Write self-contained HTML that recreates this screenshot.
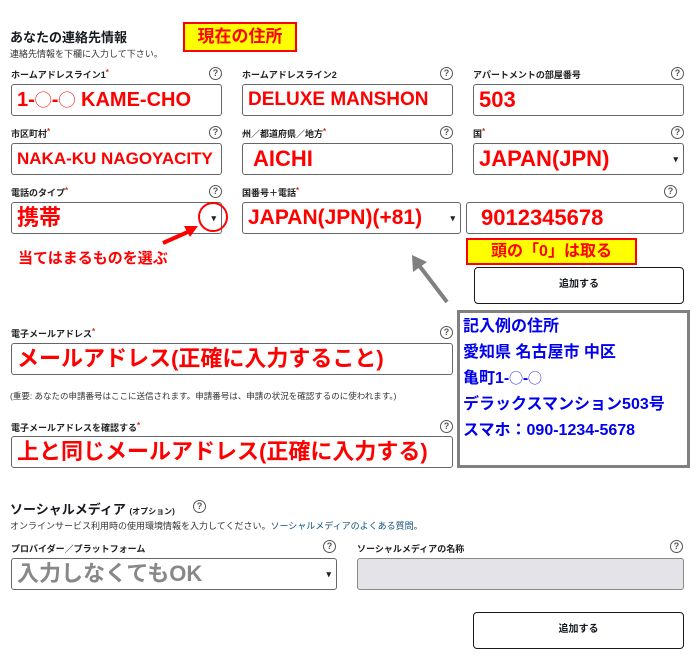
<!DOCTYPE html>
<html><head><meta charset="utf-8"><style>
*{margin:0;padding:0;box-sizing:border-box}
body{width:700px;height:667px;background:#fff;position:relative;overflow:hidden;font-family:"Liberation Sans","Noto Sans CJK JP",sans-serif;color:#16191f}
.a{position:absolute;white-space:nowrap}
.lbl{font-size:9px;font-weight:bold;color:#222}
.lbl i{color:#d13212;font-style:normal;font-size:8px;vertical-align:top}
.q{position:absolute;width:13px;height:13px;border:1.3px solid #555;border-radius:50%;font-size:9px;line-height:11px;text-align:center;color:#555;font-weight:bold}
.in{position:absolute;border:1.5px solid #666;border-radius:3px;background:#fff;height:32px;color:#ff0000;font-weight:bold;font-size:22px;line-height:30px;padding-left:5px;white-space:nowrap;overflow:hidden}
.dd:after{content:"▾";position:absolute;right:5px;top:0;font-size:9px;color:#222}
.btn{position:absolute;border:1.5px solid #16191f;border-radius:4px;font-size:10px;font-weight:bold;text-align:center;color:#16191f}
.y{position:absolute;background:#ffff00;border:2px solid #f00;color:#f00;font-weight:bold;text-align:center}
.blue{color:#0000ee;font-weight:bold;font-size:16px;line-height:26px}
.c{font-weight:normal;font-size:0.85em}
</style></head><body>
<div class="a" style="left:10px;top:27px;font-size:13px;font-weight:bold">あなたの連絡先情報</div>
<div class="y" style="left:183px;top:22px;width:114px;height:30px;font-size:17px;line-height:26px">現在の住所</div>
<div class="a" style="left:10px;top:47px;font-size:9px;color:#333">連絡先情報を下欄に入力して下さい。</div>

<div class="a lbl" style="left:11px;top:68px">ホームアドレスライン1<i>*</i></div><div class="q" style="left:209px;top:67px">?</div>
<div class="a lbl" style="left:242px;top:68px">ホームアドレスライン2</div><div class="q" style="left:440px;top:67px">?</div>
<div class="a lbl" style="left:473px;top:68px">アパートメントの部屋番号</div><div class="q" style="left:671px;top:67px">?</div>
<div class="in" style="left:11px;top:84px;width:211px;font-size:20px">1-<span class="c">◯</span>-<span class="c">◯</span> KAME-CHO</div>
<div class="in" style="left:242px;top:84px;width:211px;font-size:19px">DELUXE MANSHON</div>
<div class="in" style="left:473px;top:84px;width:211px">503</div>

<div class="a lbl" style="left:11px;top:127px">市区町村<i>*</i></div><div class="q" style="left:209px;top:126px">?</div>
<div class="a lbl" style="left:242px;top:127px">州／都道府県／地方<i>*</i></div><div class="q" style="left:440px;top:126px">?</div>
<div class="a lbl" style="left:473px;top:127px">国<i>*</i></div><div class="q" style="left:671px;top:126px">?</div>
<div class="in" style="left:11px;top:143px;width:211px;font-size:17px">NAKA-KU NAGOYACITY</div>
<div class="in" style="left:242px;top:143px;width:211px;padding-left:10px">AICHI</div>
<div class="in dd" style="left:473px;top:143px;width:211px">JAPAN(JPN)</div>

<div class="a lbl" style="left:11px;top:186px">電話のタイプ<i>*</i></div><div class="q" style="left:209px;top:185px">?</div>
<div class="a lbl" style="left:242px;top:186px">国番号＋電話<i>*</i></div><div class="q" style="left:664px;top:185px">?</div>
<div class="in dd" style="left:11px;top:202px;width:211px">携帯</div>
<div class="in dd" style="left:242px;top:202px;width:219px;font-size:21px">JAPAN(JPN)(+81)</div>
<div class="in" style="left:466px;top:202px;width:218px;padding-left:14px">9012345678</div>
<div style="position:absolute;left:198px;top:202px;width:30px;height:30px;border:2px solid #f00;border-radius:50%"></div>
<svg class="a" style="left:0;top:0" width="700" height="667">
<line x1="163" y1="243" x2="190" y2="231" stroke="#f00" stroke-width="4"/>
<polygon points="198,226 184,226 190,237" fill="#f00"/>
<line x1="447" y1="302" x2="418" y2="264" stroke="#808080" stroke-width="4"/>
<polygon points="412,255 413,272 427,262" fill="#808080"/>
</svg>
<div class="a" style="left:18px;top:247px;font-size:15px;font-weight:bold;color:#f00">当てはまるものを選ぶ</div>
<div class="y" style="left:466px;top:238px;width:171px;height:27px;font-size:16px;line-height:23px">頭の「0」は取る</div>
<div class="btn" style="left:474px;top:267px;width:210px;height:37px;line-height:34px">追加する</div>

<div style="position:absolute;left:457px;top:310px;width:233px;height:158px;border:3px solid #808080;padding:1px 0 0 3px" class="blue">記入例の住所<br>愛知県 名古屋市 中区<br>亀町1-<span class="c">◯</span>-<span class="c">◯</span><br>デラックスマンション503号<br>スマホ：090-1234-5678</div>

<div class="a lbl" style="left:11px;top:327px">電子メールアドレス<i>*</i></div><div class="q" style="left:440px;top:326px">?</div>
<div class="in" style="left:11px;top:343px;width:442px">メールアドレス(正確に入力すること)</div>
<div class="a" style="left:10px;top:390px;font-size:8.5px;color:#333">(重要: あなたの申請番号はここに送信されます。申請番号は、申請の状況を確認するのに使われます。)</div>
<div class="a lbl" style="left:11px;top:421px">電子メールアドレスを確認する<i>*</i></div><div class="q" style="left:440px;top:420px">?</div>
<div class="in" style="left:11px;top:436px;width:442px">上と同じメールアドレス(正確に入力する)</div>

<div class="a" style="left:10px;top:499px;font-size:13px;font-weight:bold">ソーシャルメディア <span style="font-size:8px">(オプション)</span></div>
<div class="q" style="left:193px;top:500px">?</div>
<div class="a" style="left:10px;top:519px;font-size:9px;color:#333">オンラインサービス利用時の使用環境情報を入力してください。<span style="color:#0e4f7a">ソーシャルメディアのよくある質問</span>。</div>
<div class="a lbl" style="left:11px;top:542px">プロバイダー／プラットフォーム</div><div class="q" style="left:323px;top:540px">?</div>
<div class="a lbl" style="left:357px;top:542px">ソーシャルメディアの名称</div><div class="q" style="left:670px;top:540px">?</div>
<div class="in dd" style="left:11px;top:558px;width:326px;color:#888">入力しなくてもOK</div>
<div class="in" style="left:357px;top:558px;width:327px;background:#e4e4e8;border-color:#888"></div>
<div class="btn" style="left:473px;top:612px;width:211px;height:37px;line-height:34px">追加する</div>
</body></html>
